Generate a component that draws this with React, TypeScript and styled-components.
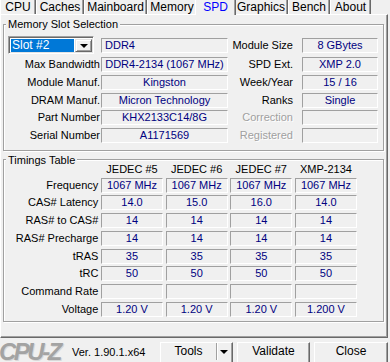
import React from 'react';
import styled, { createGlobalStyle } from 'styled-components';

const GlobalStyle = createGlobalStyle`
  html, body {
    margin: 0;
    padding: 0;
    background: #f0f0f0;
  }
  body {
    font-family: 'Liberation Sans', Arial, sans-serif;
    font-size: 11px;
    color: #000;
  }
`;

const tabs = [
  { name: 'CPU', width: 36 },
  { name: 'Caches', width: 48 },
  { name: 'Mainboard', width: 63 },
  { name: 'Memory', width: 50 },
  { name: 'SPD', width: 41, active: true },
  { name: 'Graphics', width: 54 },
  { name: 'Bench', width: 42 },
  { name: 'About', width: 41 },
];

const slotRows = [
  { label: 'Max Bandwidth', value: 'DDR4-2134 (1067 MHz)', rLabel: 'SPD Ext.', rValue: 'XMP 2.0' },
  { label: 'Module Manuf.', value: 'Kingston', rLabel: 'Week/Year', rValue: '15 / 16' },
  { label: 'DRAM Manuf.', value: 'Micron Technology', rLabel: 'Ranks', rValue: 'Single' },
  { label: 'Part Number', value: 'KHX2133C14/8G', rLabel: 'Correction', rValue: '', disabled: true },
  { label: 'Serial Number', value: 'A1171569', rLabel: 'Registered', rValue: '', disabled: true },
];

const timingHeaders = ['JEDEC #5', 'JEDEC #6', 'JEDEC #7', 'XMP-2134'];

const timingRows: [string, string[]][] = [
  ['Frequency', ['1067 MHz', '1067 MHz', '1067 MHz', '1067 MHz']],
  ['CAS# Latency', ['14.0', '15.0', '16.0', '14.0']],
  ['RAS# to CAS#', ['14', '14', '14', '14']],
  ['RAS# Precharge', ['14', '14', '14', '14']],
  ['tRAS', ['35', '35', '35', '35']],
  ['tRC', ['50', '50', '50', '50']],
  ['Command Rate', ['', '', '', '']],
  ['Voltage', ['1.20 V', '1.20 V', '1.20 V', '1.200 V']],
];

const App: React.FC = () => {
  return (
    <Window>
      <GlobalStyle />
      <TabStrip>
        {tabs.map((t) => (
          <Tab key={t.name} $width={t.width} $active={t.active}>
            {t.name}
          </Tab>
        ))}
      </TabStrip>

      <Panel>
        <GroupBox>
          <GroupTitle>Memory Slot Selection</GroupTitle>
          <SlotGrid>
            <ComboBox>
              <ComboText>Slot #2</ComboText>
              <ComboButton>
                <Arrow />
              </ComboButton>
            </ComboBox>
            <Field $align="left">DDR4</Field>
            <Label $pad={9}>Module Size</Label>
            <Field>8 GBytes</Field>

            {slotRows.map((r) => (
              <React.Fragment key={r.label}>
                <Label $pad={1}>{r.label}</Label>
                <Field>{r.value}</Field>
                <Label $pad={9} $disabled={r.disabled}>
                  {r.rLabel}
                </Label>
                <Field>{r.rValue}</Field>
              </React.Fragment>
            ))}
          </SlotGrid>
        </GroupBox>

        <GroupBox $gapTop={3}>
          <GroupTitle>Timings Table</GroupTitle>
          <TimingGrid>
            <span />
            {timingHeaders.map((h) => (
              <HeaderCell key={h}>{h}</HeaderCell>
            ))}
            {timingRows.map(([label, values]) => (
              <React.Fragment key={label}>
                <Label>{label}</Label>
                {values.map((v, i) => (
                  <Field key={i}>{v}</Field>
                ))}
              </React.Fragment>
            ))}
          </TimingGrid>
        </GroupBox>
      </Panel>

      <BottomBar>
        <Logo>CPU-Z</Logo>
        <Version>Ver. 1.90.1.x64</Version>
        <Buttons>
          <ToolsButton>
            <ToolsText>Tools</ToolsText>
            <ToolsArrow>
              <Arrow />
            </ToolsArrow>
          </ToolsButton>
          <Button $width={73}>Validate</Button>
          <Button $width={74}>Close</Button>
        </Buttons>
      </BottomBar>
    </Window>
  );
};

export default App;

const Window = styled.div`
  width: 390px;
  height: 362px;
  overflow: hidden;
  background: #f0f0f0;
`;

const TabStrip = styled.div`
  display: flex;
  align-items: flex-end;
  height: 14px;
`;

const Tab = styled.div<{ $width: number; $active?: boolean }>`
  box-sizing: border-box;
  width: ${({ $width }) => $width}px;
  height: ${({ $active }) => ($active ? 17 : 14)}px;
  margin: ${({ $active }) => ($active ? '0 -2px -1px -2px' : '0')};
  padding-top: ${({ $active }) => ($active ? 3 : 1)}px;
  position: relative;
  z-index: ${({ $active }) => ($active ? 2 : 0)};
  border-left: 1px solid #ffffff;
  border-right: 1px solid #696969;
  box-shadow: inset -1px 0 0 #a0a0a0;
  background: #f0f0f0;
  color: ${({ $active }) => ($active ? '#0000ff' : '#000')};
  font-size: 12px;
  line-height: 12px;
  text-align: center;
  white-space: nowrap;
`;

const Panel = styled.div`
  box-sizing: border-box;
  width: 388px;
  height: 324px;
  padding: 3px 0 0 2px;
  border-top: 1px solid #ffffff;
  border-left: 1px solid #ffffff;
  border-right: 1px solid #696969;
  border-bottom: 1px solid #696969;
  box-shadow: inset -1px -1px 0 #a0a0a0;
`;

const GroupBox = styled.fieldset<{ $gapTop?: number }>`
  box-sizing: border-box;
  width: 381px;
  margin: ${({ $gapTop }) => $gapTop ?? 0}px 0 0 0;
  padding: 0;
  border: 1px solid #a0a0a0;
  box-shadow: 1px 1px 0 #ffffff, inset 1px 1px 0 #ffffff;
  min-width: 0;
`;

const GroupTitle = styled.legend`
  margin-left: 2px;
  padding: 0 2px;
  font-size: 11px;
  line-height: 12px;
  background: #f0f0f0;
`;

const SlotGrid = styled.div`
  display: grid;
  grid-template-columns: 93px 127px 74px 76px;
  grid-template-rows: 18.67px repeat(5, 15px);
  row-gap: 2.67px;
  align-items: center;
  margin: 6px 0 7px 4px;
`;

const TimingGrid = styled.div`
  display: grid;
  grid-template-columns: 90.33px repeat(4, 62px);
  grid-template-rows: 13px repeat(8, 15px);
  column-gap: 2.67px;
  row-gap: 2.75px;
  align-items: center;
  margin: -4px 0 4px 4px;
`;

const Label = styled.div<{ $pad?: number; $disabled?: boolean }>`
  padding-right: ${({ $pad }) => $pad ?? 0}px;
  text-align: right;
  white-space: nowrap;
  line-height: 15px;
  color: ${({ $disabled }) => ($disabled ? '#a0a0a0' : '#000')};
  text-shadow: ${({ $disabled }) => ($disabled ? '1px 1px 0 #ffffff' : 'none')};
`;

const HeaderCell = styled.div`
  text-align: center;
  line-height: 13px;
  padding-top: 2px;
  white-space: nowrap;
`;

const Field = styled.div<{ $align?: 'left' | 'center' }>`
  box-sizing: border-box;
  height: 15px;
  padding: 0 3px;
  border-top: 1px solid #a0a0a0;
  border-left: 1px solid #a0a0a0;
  border-bottom: 1px solid #ffffff;
  border-right: 1px solid #ffffff;
  color: #000080;
  line-height: 13px;
  text-align: ${({ $align }) => $align ?? 'center'};
  white-space: nowrap;
  overflow: hidden;
`;

const ComboBox = styled.div`
  box-sizing: border-box;
  width: 86px;
  height: 18px;
  display: flex;
  padding: 1px;
  background: #ffffff;
  border-top: 1px solid #a0a0a0;
  border-left: 1px solid #a0a0a0;
  border-bottom: 1px solid #ffffff;
  border-right: 1px solid #ffffff;
  box-shadow: inset 1px 1px 0 #696969, inset -1px -1px 0 #e3e3e3;
`;

const ComboText = styled.div`
  flex: 1;
  margin: 1px 1px 0 1px;
  padding-left: 1px;
  background: #0078d7;
  color: #ffffff;
  font-size: 12px;
  line-height: 13px;
`;

const ComboButton = styled.div`
  box-sizing: border-box;
  width: 17px;
  margin-top: 1px;
  display: flex;
  align-items: center;
  justify-content: center;
  background: #f0f0f0;
  border-top: 1px solid #e3e3e3;
  border-left: 1px solid #e3e3e3;
  border-bottom: 1px solid #696969;
  border-right: 1px solid #696969;
  box-shadow: inset 1px 1px 0 #ffffff, inset -1px -1px 0 #a0a0a0;
`;

const Arrow = styled.div`
  width: 0;
  height: 0;
  border-left: 4px solid transparent;
  border-right: 4px solid transparent;
  border-top: 4px solid #000;
`;

const BottomBar = styled.div`
  display: flex;
  align-items: flex-start;
  height: 24px;
`;

const Logo = styled.div`
  margin: 4px 0 0 -1px;
  width: 60px;
  font-size: 24px;
  font-weight: bold;
  font-style: italic;
  letter-spacing: -2.5px;
  line-height: 20px;
  color: #a3a3a3;
  text-shadow: 1px 1px 0 #d8d8d8;
  white-space: nowrap;
`;

const Version = styled.div`
  margin: 8px 0 0 13px;
  font-size: 11px;
  line-height: 13px;
  white-space: nowrap;
`;

const Buttons = styled.div`
  display: flex;
  gap: 4px;
  margin: 4px 2px 0 auto;
`;

const Button = styled.div<{ $width: number }>`
  box-sizing: border-box;
  width: ${({ $width }) => $width}px;
  height: 23px;
  border-top: 1px solid #ffffff;
  border-left: 1px solid #ffffff;
  border-right: 1px solid #696969;
  border-bottom: 1px solid #696969;
  box-shadow: inset -1px -1px 0 #a0a0a0;
  text-align: center;
  font-size: 12px;
  line-height: 17px;
`;

const ToolsButton = styled.div`
  box-sizing: border-box;
  width: 73px;
  height: 23px;
  display: flex;
  border-top: 1px solid #ffffff;
  border-left: 1px solid #ffffff;
  border-right: 1px solid #696969;
  border-bottom: 1px solid #696969;
  box-shadow: inset -1px -1px 0 #a0a0a0;
`;

const ToolsText = styled.div`
  flex: 1;
  text-align: center;
  font-size: 12px;
  line-height: 17px;
`;

const ToolsArrow = styled.div`
  box-sizing: border-box;
  width: 15px;
  height: 17px;
  display: flex;
  align-items: center;
  justify-content: center;
  border-left: 1px solid #a0a0a0;
  box-shadow: inset 1px 0 0 #ffffff;
  margin-right: 1px;
`;
